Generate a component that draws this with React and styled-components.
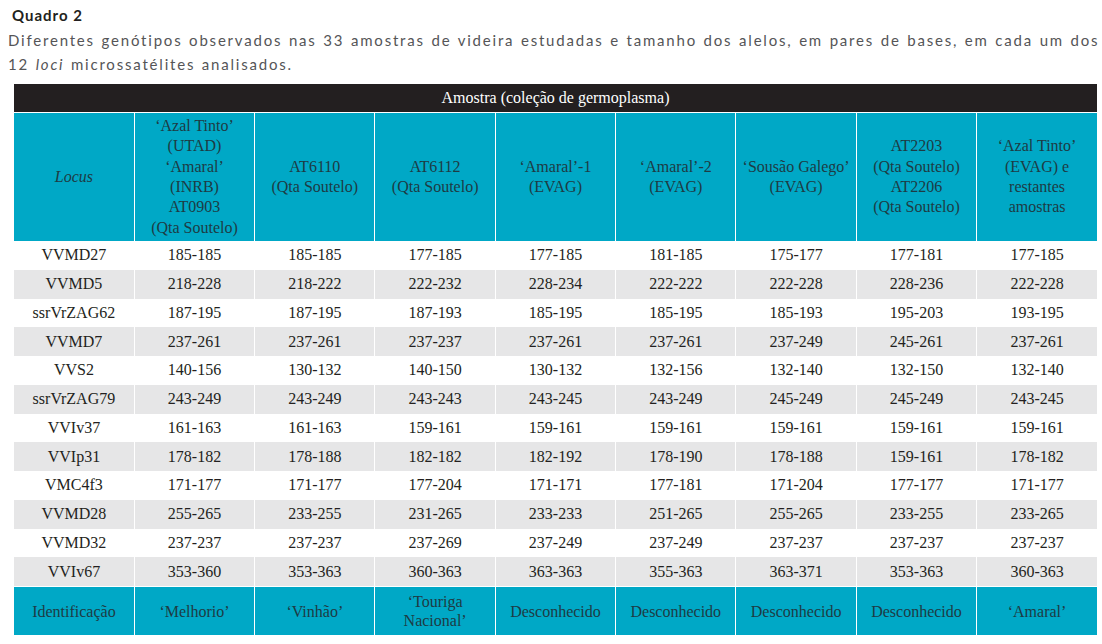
import React from "react";
import styled, { createGlobalStyle } from "styled-components";

const GlobalStyle = createGlobalStyle`
  html, body {
    margin: 0;
    padding: 0;
    background: #fff;
  }
`;

const Page = styled.div`
  width: 1102px;
  height: 644px;
  padding: 5px 5px 0 12px;
  box-sizing: border-box;
  overflow: hidden;
`;

const Title = styled.div`
  font-family: "Lato", "Noto Sans", sans-serif;
  font-weight: 700;
  font-size: 15px;
  letter-spacing: 1px;
  color: #231f20;
  line-height: 20px;
`;

const Caption = styled.p`
  margin: 3px 0 0 -4px;
  font-family: "Lato", "Noto Sans", sans-serif;
  font-weight: 400;
  font-size: 15px;
  letter-spacing: 1.8px;
  word-spacing: 1px;
  line-height: 24px;
  color: #555557;
  white-space: nowrap;

  em {
    font-style: italic;
  }
`;

const Table = styled.table`
  margin: 8px 0 0 2px;
  width: 1083px;
  border-collapse: collapse;
  table-layout: fixed;
  font-family: "Liberation Serif", "Times New Roman", serif;
  font-size: 16px;
  color: #231f20;
  text-align: center;
`;

const TopCell = styled.th`
  background: #231f20;
  color: #fff;
  font-weight: 400;
  height: 28px;
  padding: 0;
  border-bottom: 1px solid #fff;
`;

const HeadCell = styled.th`
  background: #00a8c6;
  color: #1e3b44;
  font-weight: 400;
  height: 128px;
  padding: 0 4px;
  line-height: 20.4px;
  border-left: 1px solid #fff;
  vertical-align: middle;

  &:first-child {
    border-left: none;
    font-style: italic;
  }
`;

const Row = styled.tr`
  background: ${(p) => (p.$shade ? "#e6e6e7" : "#fff")};
`;

const Cell = styled.td`
  height: 28.75px;
  padding: 0;
  border-left: 1px solid #fff;

  &:first-child {
    border-left: none;
  }
`;

const FootCell = styled.td`
  background: #00a8c6;
  color: #1e3b44;
  height: 48px;
  padding: 0 2px;
  line-height: 19px;
  border-left: 1px solid #fff;
  border-top: 1px solid #fff;

  &:first-child {
    border-left: none;
  }
`;

const headers = [
  ["Locus"],
  ["‘Azal Tinto’", "(UTAD)", "‘Amaral’", "(INRB)", "AT0903", "(Qta Soutelo)"],
  ["AT6110", "(Qta Soutelo)"],
  ["AT6112", "(Qta Soutelo)"],
  ["‘Amaral’-1", "(EVAG)"],
  ["‘Amaral’-2", "(EVAG)"],
  ["‘Sousão Galego’", "(EVAG)"],
  ["AT2203", "(Qta Soutelo)", "AT2206", "(Qta Soutelo)"],
  ["‘Azal Tinto’", "(EVAG) e", "restantes", "amostras"],
];

const rows = [
  ["VVMD27", "185-185", "185-185", "177-185", "177-185", "181-185", "175-177", "177-181", "177-185"],
  ["VVMD5", "218-228", "218-222", "222-232", "228-234", "222-222", "222-228", "228-236", "222-228"],
  ["ssrVrZAG62", "187-195", "187-195", "187-193", "185-195", "185-195", "185-193", "195-203", "193-195"],
  ["VVMD7", "237-261", "237-261", "237-237", "237-261", "237-261", "237-249", "245-261", "237-261"],
  ["VVS2", "140-156", "130-132", "140-150", "130-132", "132-156", "132-140", "132-150", "132-140"],
  ["ssrVrZAG79", "243-249", "243-249", "243-243", "243-245", "243-249", "245-249", "245-249", "243-245"],
  ["VVIv37", "161-163", "161-163", "159-161", "159-161", "159-161", "159-161", "159-161", "159-161"],
  ["VVIp31", "178-182", "178-188", "182-182", "182-192", "178-190", "178-188", "159-161", "178-182"],
  ["VMC4f3", "171-177", "171-177", "177-204", "171-171", "177-181", "171-204", "177-177", "171-177"],
  ["VVMD28", "255-265", "233-255", "231-265", "233-233", "251-265", "255-265", "233-255", "233-265"],
  ["VVMD32", "237-237", "237-237", "237-269", "237-249", "237-249", "237-237", "237-237", "237-237"],
  ["VVIv67", "353-360", "353-363", "360-363", "363-363", "355-363", "363-371", "353-363", "360-363"],
];

const footer = [
  ["Identificação"],
  ["‘Melhorio’"],
  ["‘Vinhão’"],
  ["‘Touriga", "Nacional’"],
  ["Desconhecido"],
  ["Desconhecido"],
  ["Desconhecido"],
  ["Desconhecido"],
  ["‘Amaral’"],
];

const Lines = ({ lines }) =>
  lines.map((line, i) => (
    <React.Fragment key={i}>
      {i > 0 && <br />}
      {line}
    </React.Fragment>
  ));

export default function App() {
  return (
    <Page>
      <GlobalStyle />
      <Title>Quadro 2</Title>
      <Caption>
        Diferentes genótipos observados nas 33 amostras de videira estudadas e
        tamanho dos alelos, em pares de bases, em cada um dos
        <br />
        12 <em>loci</em> microssatélites analisados.
      </Caption>
      <Table>
        <thead>
          <tr>
            <TopCell colSpan={9}>Amostra (coleção de germoplasma)</TopCell>
          </tr>
          <tr>
            {headers.map((h, i) => (
              <HeadCell key={i}>
                <Lines lines={h} />
              </HeadCell>
            ))}
          </tr>
        </thead>
        <tbody>
          {rows.map((r, i) => (
            <Row key={r[0]} $shade={i % 2 === 1}>
              {r.map((v, j) => (
                <Cell key={j}>{v}</Cell>
              ))}
            </Row>
          ))}
          <tr>
            {footer.map((f, i) => (
              <FootCell key={i}>
                <Lines lines={f} />
              </FootCell>
            ))}
          </tr>
        </tbody>
      </Table>
    </Page>
  );
}
